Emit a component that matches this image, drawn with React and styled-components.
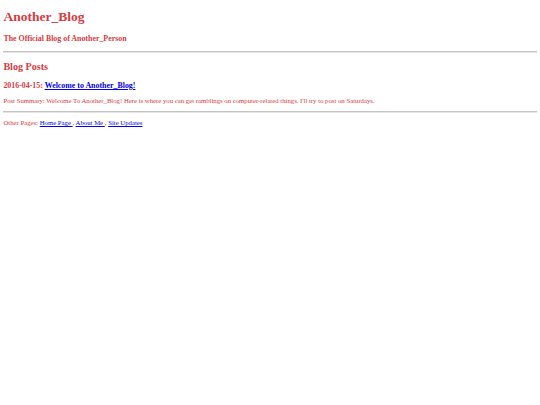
import React from "react";
import styled, { createGlobalStyle } from "styled-components";

// the page is plain default html, shown at ~0.42 scale
const GlobalStyle = createGlobalStyle`
  html, body {
    margin: 0;
    padding: 0;
    background: #ffffff;
  }
  body {
    font-family: "Liberation Serif", "Times New Roman", serif;
  }
`;

const red = "#da3a40";

const Page = styled.div`
  padding: 0 3.4px;
  color: ${red};
  font-family: "Liberation Serif", "Times New Roman", serif;
  display: flow-root;
`;

const Title = styled.h1`
  font-size: 13.5px;
  font-weight: bold;
  margin: 9px 0;
`;

const SubTitle = styled.h3`
  font-size: 7.9px;
  font-weight: bold;
  margin: 7.86px 0;
`;

const Rule = styled.hr`
  margin: 3.4px 0;
  border: none;
  border-top: 1px solid #c4c4c4;
  border-bottom: 1px solid #e4e4e4;
  height: 0;
`;

const Section = styled.h2`
  font-size: 10.1px;
  font-weight: bold;
  margin: 8.37px 0;
`;

const PostHead = styled.h3`
  font-size: 7.9px;
  font-weight: bold;
  margin: 7.86px 0;
`;

const Text = styled.p`
  font-size: 6.74px;
  margin: 6.5px 0;
`;

const Link = styled.a`
  color: #0000ee;
  text-decoration: underline;
`;

export default function App() {
  return (
    <>
      <GlobalStyle />
      <Page>
        <Title>Another_Blog</Title>
        <SubTitle>The Official Blog of Another_Person</SubTitle>
        <Rule />
        <Section>Blog Posts</Section>
        <PostHead>
          2016-04-15: <Link href="#">Welcome to Another_Blog!</Link>
        </PostHead>
        <Text>
          Post Summary: Welcome To Another_Blog! Here is where you can get
          ramblings on computer-related things. I'll try to post on Saturdays.
        </Text>
        <Rule />
        <Text>
          Other Pages: <Link href="#">Home Page </Link>,{" "}
          <Link href="#">About Me </Link>, <Link href="#">Site Updates</Link>
        </Text>
      </Page>
    </>
  );
}
